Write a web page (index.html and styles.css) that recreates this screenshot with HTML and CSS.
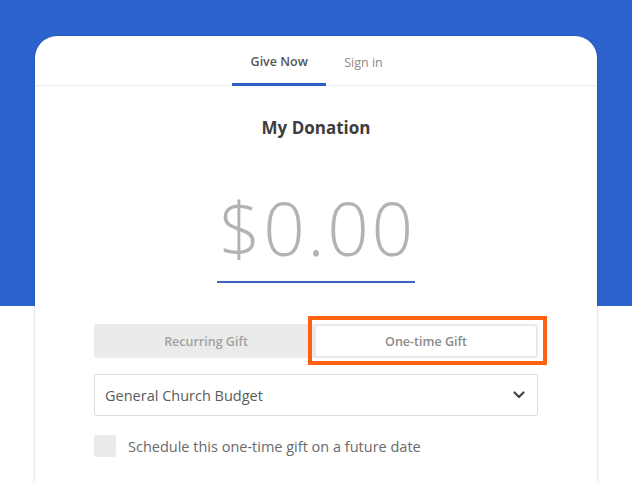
FILE: index.html
```html
<!DOCTYPE html>
<html>
<head>
<meta charset="utf-8">
<link rel="stylesheet" href="styles.css">
</head>
<body>
<div class="page">
  <div class="card">
    <div class="tabs">
      <div class="tab active">Give Now</div>
      <div class="tab">Sign in</div>
    </div>
    <div class="content">
      <h1 class="title">My Donation</h1>
      <div class="amount-wrap">
        <div class="amount">$0.00</div>
      </div>
      <div class="segment">
        <div class="seg-item">Recurring Gift</div>
        <div class="seg-item selected">One-time Gift
          <span class="highlight"></span>
        </div>
      </div>
      <div class="select">
        <span>General Church Budget</span>
        <svg class="chev" width="12" height="8" viewBox="0 0 12 8"><path d="M1.5 1.5 L6 6 L10.5 1.5" fill="none" stroke="#444" stroke-width="2.2" stroke-linecap="round" stroke-linejoin="round"/></svg>
      </div>
      <label class="check">
        <span class="box"></span>
        <span class="check-text">Schedule this one-time gift on a future date</span>
      </label>
    </div>
  </div>
</div>
</body>
</html>
```
FILE: styles.css
```css
html, body {
  margin: 0;
  padding: 0;
}
body {
  width: 632px;
  height: 482px;
  overflow: hidden;
  font-family: "Open Sans", "Liberation Sans", sans-serif;
  background: linear-gradient(to bottom, #2c63cd 0, #2c63cd 306px, #ffffff 306px);
}
.page {
  padding-top: 36px;
  padding-left: 35px;
}
.card {
  width: 562px;
  height: 470px;
  background: #fff;
  border-radius: 22px 22px 0 0;
  box-shadow: -1px 0 2px rgba(0,0,0,0.10), 1px 0 2px rgba(0,0,0,0.10);
}
.tabs {
  display: flex;
  justify-content: center;
  height: 50px;
  border-bottom: 1px solid #ececec;
  box-sizing: border-box;
  padding-left: 1px;
}
.tab {
  padding: 0 18px;
  font-size: 12.5px;
  line-height: 54px;
  color: #8a8a8a;
  box-sizing: border-box;
  height: 50px;
}
.tab.active {
  color: #555;
  font-weight: 600;
  width: 94px;
  text-align: center;
  border-bottom: 3px solid #2d5fc4;
  line-height: 52px;
}
.content {
  padding: 0 59px;
}
.title {
  margin: 0;
  padding-top: 30px;
  text-align: center;
  font-size: 17px;
  font-weight: 700;
  line-height: 24px;
  color: #3d3d3d;
}
.amount-wrap {
  display: flex;
  justify-content: center;
  margin-top: 50px;
}
.amount {
  width: 198px;
  text-align: center;
  font-size: 73px;
  font-weight: 300;
  line-height: 76px;
  color: #b3b3b3;
  border-bottom: 2px solid #3f62c0;
  padding-bottom: 15px;
  letter-spacing: 2.5px;
  text-indent: 2px;
}
.segment {
  margin-top: 41px;
  height: 34px;
  background: #ebebeb;
  border-radius: 3px;
  display: flex;
  padding: 2px;
  box-sizing: border-box;
}
.seg-item {
  flex: 1;
  display: flex;
  align-items: center;
  justify-content: center;
  font-size: 12.5px;
  font-weight: 600;
  color: #a2a2a2;
  position: relative;
}
.seg-item.selected {
  flex: 0 0 220px;
  background: #fff;
  border-radius: 2px;
  color: #8a8a8a;
  box-shadow: 0 0 1px rgba(0,0,0,0.15);
}
.highlight {
  position: absolute;
  left: -8px;
  right: -11px;
  top: -10px;
  bottom: -9px;
  border: 4px solid #ff6110;
}
.select {
  margin-top: 16px;
  height: 42px;
  border: 1px solid #dcdcdc;
  border-radius: 3px;
  box-sizing: border-box;
  display: flex;
  align-items: center;
  justify-content: space-between;
  padding: 0 12px 0 10px;
  font-size: 14.5px;
  color: #5a5a5a;
}
.chev {
  display: block;
}
.check {
  margin-top: 19px;
  display: flex;
  align-items: center;
}
.box {
  width: 22px;
  height: 22px;
  background: #ebebec;
  border-radius: 2px;
  margin-right: 12px;
}
.check-text {
  font-size: 14.5px;
  color: #6a6a6a;
}
```
